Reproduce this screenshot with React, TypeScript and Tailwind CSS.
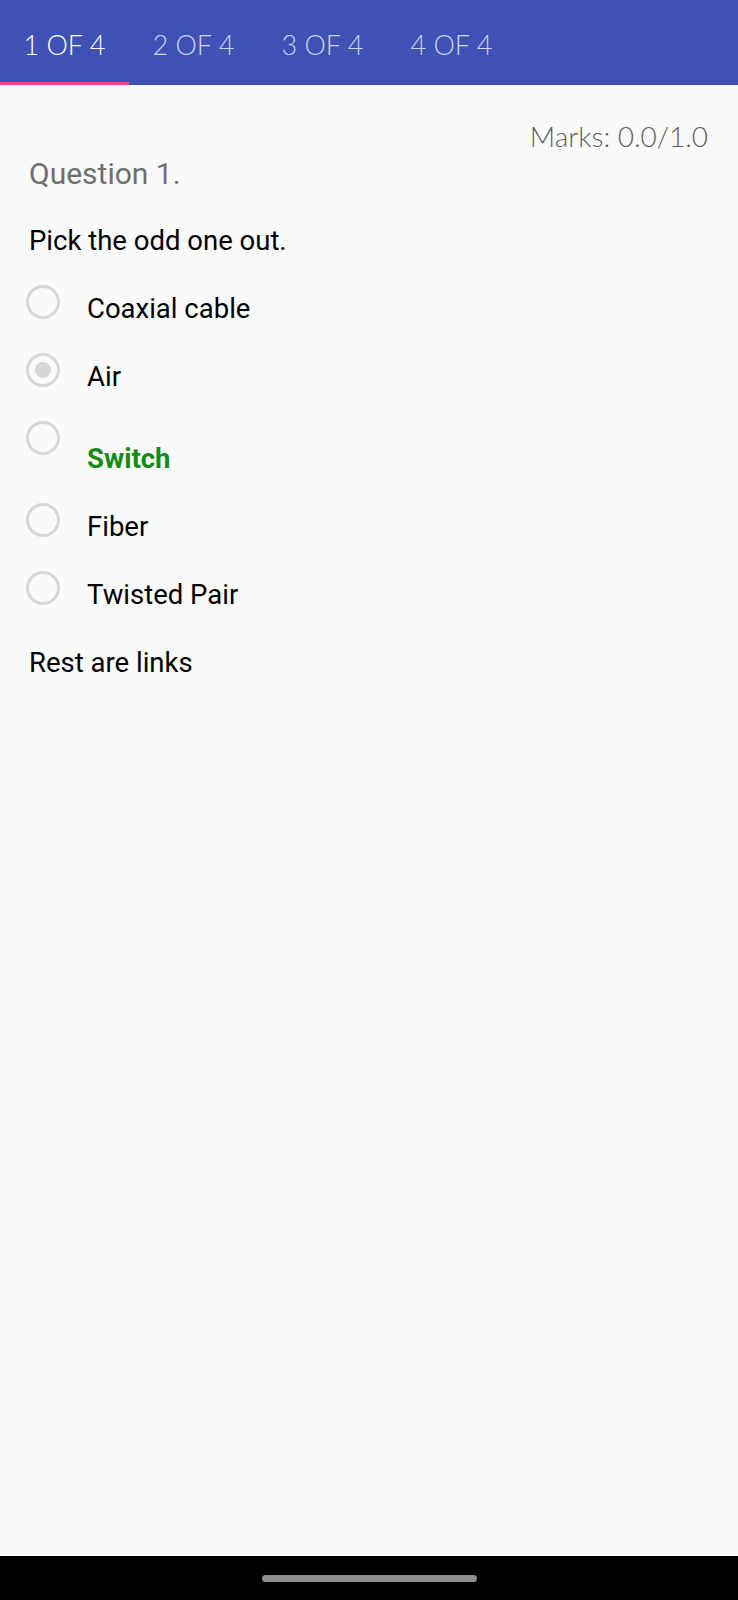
const tabs = ["1 OF 4", "2 OF 4", "3 OF 4", "4 OF 4"];

type Option = { label: string; checked?: boolean; correct?: boolean };

const options: Option[] = [
  { label: "Coaxial cable" },
  { label: "Air", checked: true },
  { label: "Switch", correct: true },
  { label: "Fiber" },
  { label: "Twisted Pair" },
];

function Radio({ checked }: { checked?: boolean }) {
  return (
    <div className="w-[34px] h-[34px] shrink-0 rounded-full border-[3px] border-[#d6d6d6] flex items-center justify-center">
      {checked && <div className="w-[16px] h-[16px] rounded-full bg-[#d6d6d6]" />}
    </div>
  );
}

export default function App() {
  return (
    <div className="h-screen flex flex-col bg-[#fafafa] font-['Roboto',sans-serif]">
      {/* tab bar */}
      <div className="h-[85px] bg-[#3f51b5] flex items-end shrink-0">
        {tabs.map((t, i) => (
          <div key={t} className="w-[129px] h-full flex flex-col">
            <div
              className={
                "flex-1 flex justify-center pt-[28px] font-['Lato',sans-serif] font-light text-[27px] leading-[34px] " +
                (i === 0 ? "text-white" : "text-white/75")
              }
            >
              {t}
            </div>
            <div className={"h-[3px] " + (i === 0 ? "bg-[#ff4081]" : "bg-transparent")} />
          </div>
        ))}
      </div>

      {/* question */}
      <div className="flex-1 flex flex-col">
        <div className="mt-[34px] pr-[30px] flex justify-end font-['Lato',sans-serif] font-light text-[28px] leading-[34px] text-[#5f5f5f]">
          Marks: 0.0/1.0
        </div>
        <div className="mt-[3px] pl-[29px] text-[30px] leading-[36px] text-[#6f6f6f]">Question 1.</div>
        <div className="mt-[33px] pl-[29px] text-[27.5px] leading-[32px] text-black">Pick the odd one out.</div>

        <div className="mt-[28px] pl-[26px] flex flex-col gap-[28px]">
          {options.map((o) => (
            <div key={o.label} className="flex items-start gap-[27px]">
              <Radio checked={o.checked} />
              <span
                className={
                  "text-[27.5px] leading-[32px] " +
                  (o.correct ? "mt-[22px] font-bold text-[#148c14]" : "mt-[8px] text-black")
                }
              >
                {o.label}
              </span>
            </div>
          ))}
        </div>

        <div className="mt-[36px] pl-[29px] text-[27.5px] leading-[32px] text-black">Rest are links</div>
      </div>

      {/* system nav bar */}
      <div className="h-[44px] shrink-0 bg-black flex items-center justify-center">
        <div className="w-[215px] h-[7px] rounded-full bg-[#8e8e8e]" />
      </div>
    </div>
  );
}
